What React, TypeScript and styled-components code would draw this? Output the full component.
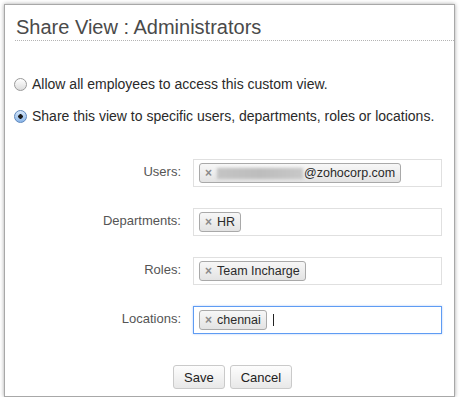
import React from 'react'
import styled, { createGlobalStyle } from 'styled-components'

const GlobalStyle = createGlobalStyle`
  html, body {
    margin: 0;
    padding: 0;
    background: #ffffff;
    font-family: 'Liberation Sans', Arial, sans-serif;
  }
`

const Dialog = styled.div`
  box-sizing: border-box;
  margin: 4px 0 0 4px;
  width: 451px;
  height: 393px;
  background: #fff;
  border: 1px solid #a8a8a8;
  box-shadow: 0 0 4px rgba(0, 0, 0, 0.35);
  display: flex;
  flex-direction: column;
`

const Header = styled.div`
  margin-left: 10px;
  padding: 11px 0 0 1px;
  height: 24px;
  border-bottom: 1px dotted #b4b4b4;
`

const Title = styled.h1`
  margin: 0;
  font-size: 20px;
  line-height: 22px;
  font-weight: normal;
  color: #4a4a4a;
`

const Options = styled.div`
  display: flex;
  flex-direction: column;
  gap: 16px;
  padding: 35px 0 0 9px;
`

const Option = styled.label`
  display: flex;
  align-items: center;
  gap: 5px;
  font-size: 14px;
  line-height: 16px;
  color: #2a2a2a;
`

const Radio = styled.input.attrs({ type: 'radio' })`
  appearance: none;
  margin: 0;
  width: 13px;
  height: 13px;
  border-radius: 50%;
  border: 1px solid #9a9a9a;
  box-sizing: border-box;
  background: linear-gradient(#ffffff, #dcdcdc);

  &:checked {
    border-color: #5d87bd;
    background: radial-gradient(circle, #1b1b1b 0 2px, transparent 2.5px),
      linear-gradient(#d6e7fa, #89b5e8);
  }
`

const Fields = styled.div`
  display: grid;
  grid-template-columns: 176px 249px;
  column-gap: 12px;
  row-gap: 21px;
  padding-top: 35px;
`

const Label = styled.div`
  text-align: right;
  padding-top: 5px;
  font-size: 13px;
  line-height: 15px;
  color: #555;
`

const Box = styled.div<{ $focused?: boolean }>`
  box-sizing: border-box;
  height: 28px;
  padding: 3px 5px;
  display: flex;
  align-items: center;
  gap: 6px;
  border: 1px solid ${({ $focused }) => ($focused ? '#5f9cf3' : '#e0e0e0')};
  box-shadow: ${({ $focused }) => ($focused ? '0 0 2px rgba(80, 140, 240, 0.45)' : 'none')};
  align-self: start;
`

const Chip = styled.span`
  box-sizing: border-box;
  height: 20px;
  display: inline-flex;
  align-items: center;
  padding: 0 5px;
  border: 1px solid #a9a9a9;
  border-radius: 3px;
  background: linear-gradient(#f7f7f7, #e3e3e3);
  font-size: 12.5px;
  color: #2a2a2a;
`

const Remove = styled.span`
  font-size: 12px;
  font-weight: bold;
  color: #8a8a8a;
  margin-right: 5px;
  line-height: 1;
`

const Blurred = styled.span`
  display: inline-block;
  width: 86px;
  height: 11px;
  background: linear-gradient(90deg, #c4c4c4, #bdbdbd 50%, #c8c8c8);
  filter: blur(1.5px);
  margin-right: 1px;
`

const Caret = styled.span`
  width: 1px;
  height: 12px;
  background: #222;
`

const Actions = styled.div`
  display: flex;
  gap: 5px;
  padding: 31px 0 0 168px;
`

const Button = styled.button`
  box-sizing: border-box;
  height: 24px;
  padding: 0 10px;
  font-family: inherit;
  font-size: 13px;
  color: #222;
  border: 1px solid #cacaca;
  border-radius: 3px;
  background: linear-gradient(#fdfdfd, #e8e8e8);
`

export default function App() {
  return (
    <>
      <GlobalStyle />
      <Dialog>
        <Header>
          <Title>Share View : Administrators</Title>
        </Header>

        <Options>
          <Option>
            <Radio name="share" />
            Allow all employees to access this custom view.
          </Option>
          <Option>
            <Radio name="share" defaultChecked />
            Share this view to specific users, departments, roles or locations.
          </Option>
        </Options>

        <Fields>
          <Label>Users:</Label>
          <Box>
            <Chip>
              <Remove>×</Remove>
              <Blurred />
              @zohocorp.com
            </Chip>
          </Box>

          <Label>Departments:</Label>
          <Box>
            <Chip>
              <Remove>×</Remove>HR
            </Chip>
          </Box>

          <Label>Roles:</Label>
          <Box>
            <Chip>
              <Remove>×</Remove>Team Incharge
            </Chip>
          </Box>

          <Label>Locations:</Label>
          <Box $focused>
            <Chip>
              <Remove>×</Remove>chennai
            </Chip>
            <Caret />
          </Box>
        </Fields>

        <Actions>
          <Button>Save</Button>
          <Button>Cancel</Button>
        </Actions>
      </Dialog>
    </>
  )
}
